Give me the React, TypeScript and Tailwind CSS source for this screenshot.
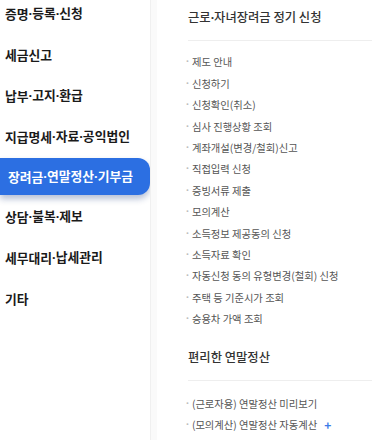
const menus = [
  "증명·등록·신청",
  "세금신고",
  "납부·고지·환급",
  "지급명세·자료·공익법인",
  "장려금·연말정산·기부금",
  "상담·불복·제보",
  "세무대리·납세관리",
  "기타",
];

const activeMenu = "장려금·연말정산·기부금";

const regularLinks = [
  "제도 안내",
  "신청하기",
  "신청확인(취소)",
  "심사 진행상황 조회",
  "계좌개설(변경/철회)신고",
  "직접입력 신청",
  "증빙서류 제출",
  "모의계산",
  "소득정보 제공동의 신청",
  "소득자료 확인",
  "자동신청 동의 유형변경(철회) 신청",
  "주택 등 기준시가 조회",
  "승용차 가액 조회",
];

const yearEndLinks = ["(근로자용) 연말정산 미리보기", "(모의계산) 연말정산 자동계산"];

// the CJK font draws "·" full width, the site uses a narrow one
function Dotted({ text }: { text: string }) {
  const parts = text.split("·");
  return (
    <>
      {parts.map((part, i) => (
        <span key={i}>
          {i > 0 ? <span className="font-['Noto_Sans'] font-bold">·</span> : null}
          {part}
        </span>
      ))}
    </>
  );
}

function LinkItem({ label, plus }: { label: string; plus?: boolean }) {
  return (
    <li className="flex h-[21.4px] items-center gap-[3px] text-[10.3px] text-[#555]">
      <span className="font-['Noto_Sans'] font-bold text-[#bbb]">·</span>
      <span>{label}</span>
      {plus ? <span className="ml-1 text-[12px] font-bold text-[#3d7be8]">+</span> : null}
    </li>
  );
}

export default function App() {
  return (
    <main
      className="flex h-[440px] w-[372px] overflow-hidden bg-white"
      style={{ fontFamily: '"Noto Sans CJK KR", "Noto Sans", sans-serif' }}
    >
      <nav className="-mt-[7px] flex w-[150px] shrink-0 flex-col">
        {menus.map((menu) =>
          menu === activeMenu ? (
            <div
              key={menu}
              className="my-[1px] flex h-[37px] items-center rounded-r-[12px] bg-[#2c6fe2] pl-[8px] text-[12.8px] font-bold text-white shadow-[0_4px_6px_rgba(20,50,120,0.3)]"
            >
              <Dotted text={menu} />
            </div>
          ) : (
            <div key={menu} className="flex h-[41px] items-center pl-[5px] text-[12.8px] font-bold text-[#1a1a1a]">
              <Dotted text={menu} />
            </div>
          )
        )}
      </nav>

      <div className="w-[7px] shrink-0 border-l border-[#f0f0f0] bg-[#fafafa]" />

      <section className="flex-1 pl-[31px]">
        <h2 className="pt-[8px] text-[12.3px] font-medium text-[#333]">
          <Dotted text="근로·자녀장려금 정기 신청" />
        </h2>
        <div className="mt-[13px] border-t border-[#eee]" />
        <ul className="-ml-[2px] mt-[10px]">
          {regularLinks.map((item) => (
            <LinkItem key={item} label={item} />
          ))}
        </ul>

        <h2 className="pt-[18px] text-[12.3px] font-medium text-[#333]">편리한 연말정산</h2>
        <div className="mt-[14px] border-t border-[#eee]" />
        <ul className="-ml-[2px] mt-[12px]">
          {yearEndLinks.map((item, i) => (
            <LinkItem key={item} label={item} plus={i === 1} />
          ))}
        </ul>
      </section>
    </main>
  );
}
